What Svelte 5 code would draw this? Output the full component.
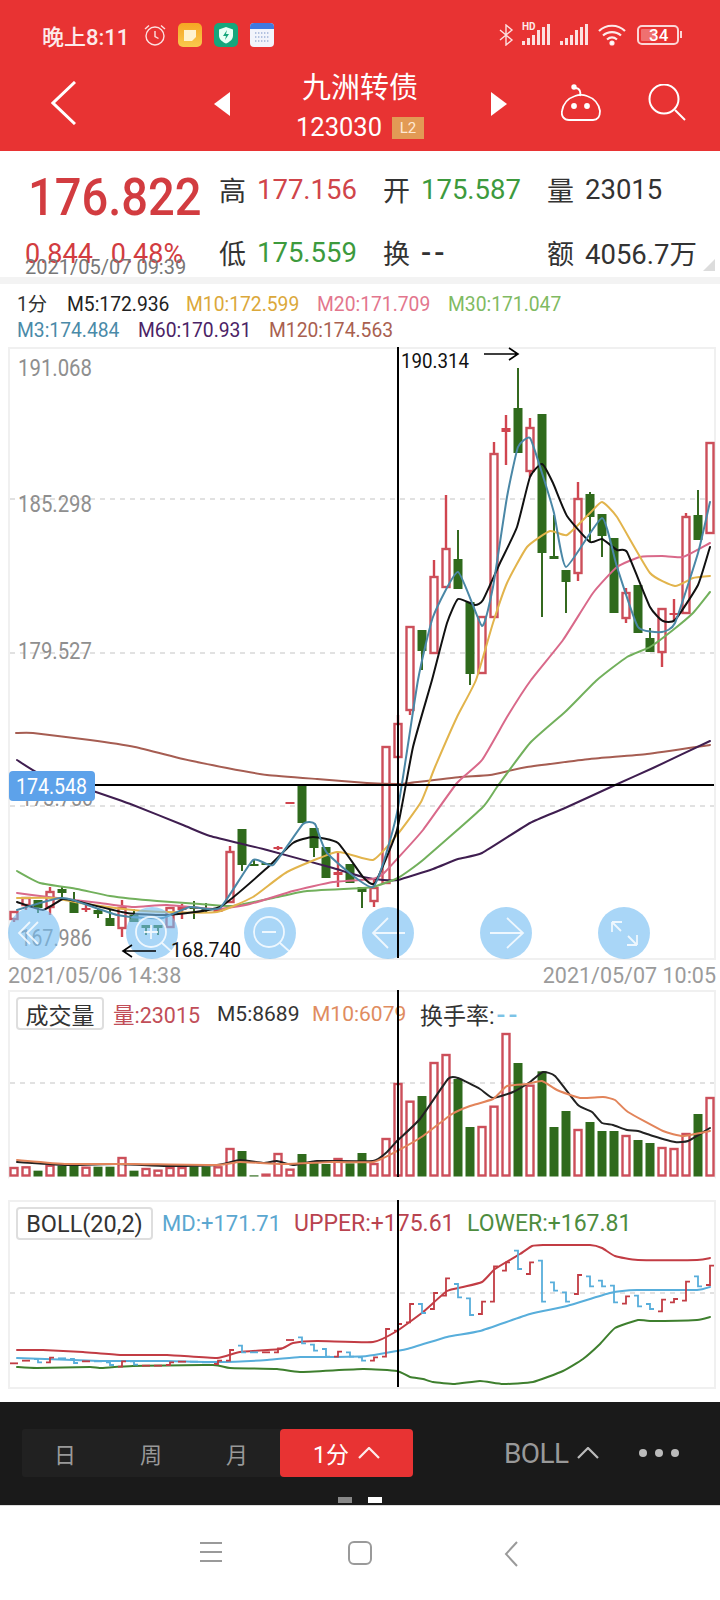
<script>
  const X = (i) => 14 + 12 * i;
  // colour, wick top, body top, body bottom, wick bottom
  const candles = [
    ['r',912,912,919,922],['r',897,898,905,910],['g',900,900,908,913],['r',887,892,907,915],['g',887,889,893,897],
    ['g',892,902,913,913],['r',904,908,909,912],['g',908,910,914,918],['g',910,918,926,926],['r',900,908,928,937],
    ['g',909,915,922,922],['g',925,925,928,935],['g',925,925,928,935],['r',908,908,927,927],['r',904,906,910,919],
    ['g',901,907,909,919],['g',903,908,910,912],['r',908,908,912,912],['r',846,852,902,902],['g',829,829,865,871],
    ['g',860,864,866,866],['g',863,863,865,865],['r',846,847,849,850],['r',802,802,804,804],['g',785,785,823,823],
    ['g',828,828,848,857],['g',847,847,878,878],['r',852,872,875,887],['g',864,864,883,883],['g',887,887,892,908],
    ['r',880,888,901,907],['r',747,747,883,883],['r',715,724,757,757],['r',627,627,710,715],['g',630,630,651,670],
    ['r',560,577,653,653],['r',495,549,587,587],['g',530,559,589,589],['g',602,602,674,685],['r',617,617,673,673],
    ['r',442,454,617,617],['r',415,428,432,465],['g',368,408,453,453],['r',418,428,471,477],['g',414,414,553,617],
    ['g',515,556,559,559],['g',570,570,582,613],['r',482,499,573,581],['g',492,494,517,542],['g',514,514,536,557],
    ['g',538,538,613,613],['r',588,593,618,623],['g',585,585,633,633],['g',628,638,652,652],['r',609,609,652,667],
    ['r',599,613,615,620],['r',513,517,613,613],['g',490,515,540,540],['r',443,443,533,533]
  ];
  const m120 = [[16,733],[33,733],[90,740],[135,747],[183,759],[227,768],[267,775],[317,779],[367,783],[397,784],[410,783],[460,777],[490,775],[527,767],[590,759],[647,754],[710,745]];
  const m60 = [[17,760],[40,774],[90,790],[133,805],[183,825],[210,836],[267,850],[333,868],[363,877],[383,880],[398,880],[433,869],[458,859],[482,853],[530,823],[565,808],[613,786],[653,768],[710,741]];
  const m30 = [[17,871],[40,883],[77,889],[110,896],[157,901],[200,904],[233,906],[273,898],[307,891],[363,888],[373,887],[398,878],[423,860],[482,808],[497,787],[530,743],[565,712],[597,680],[627,657],[650,647],[673,630],[693,613],[710,592]];
  const m20 = [[17,893],[40,896],[100,903],[133,907],[167,905],[217,909],[250,904],[293,891],[333,882],[373,879],[383,874],[398,858],[423,830],[457,783],[482,760],[507,717],[531,680],[563,640],[593,593],[617,567],[640,557],[662,556],[683,557],[710,543]];
  const m10 = [[17,898],[53,898],[80,903],[133,910],[167,912],[217,912],[253,897],[287,872],[337,852],[373,860],[397,835],[421,802],[435,767],[457,717],[476,680],[493,623],[507,583],[527,547],[550,531],[567,535],[590,513],[602,502],[617,517],[650,573],[675,586],[693,578],[710,576]];
  const m5 = [[17,902],[43,910],[63,899],[80,902],[127,913],[167,915],[220,907],[267,868],[293,843],[313,837],[338,843],[363,877],[375,883],[397,830],[413,747],[432,680],[447,623],[458,599],[475,605],[483,600],[500,563],[517,527],[530,477],[542,464],[553,483],[567,516],[590,542],[602,539],[617,550],[627,552],[650,607],[663,621],[675,620],[698,585],[710,547]];
  const m3 = [[17,910],[40,903],[60,898],[73,900],[117,915],[147,918],[163,918],[190,907],[220,908],[253,860],[273,865],[303,824],[315,824],[327,853],[373,887],[397,813],[418,680],[433,617],[458,572],[482,626],[493,587],[507,497],[518,447],[530,438],[542,473],[554,513],[566,567],[602,518],[617,567],[638,627],[662,632],[675,623],[698,553],[710,502]];
  const priceLines = [[m120,'#a65d52'],[m60,'#3f1e50'],[m30,'#72b05c'],[m20,'#d9698a'],[m10,'#e2b44c'],[m5,'#111'],[m3,'#4a87a6']];

  const volTop = [
    ['r',567],['r',565],['g',575],['r',560],['g',560],['g',560],['r',566],['g',563],['g',563],['r',537],
    ['g',575],['r',570],['r',575],['r',567],['r',567],['g',562],['g',562],['r',565],['r',510],['g',516],
    ['g',589],['r',587],['r',525],['r',572],['g',525],['g',548],['g',555],['r',540],['g',553],['g',522],
    ['r',555],['r',480],['r',315],['r',368],['g',351],['r',252],['r',228],['g',300],['g',444],['r',444],
    ['r',383],['r',165],['g',252],['r',320],['g',277],['g',444],['g',396],['r',453],['g',429],['g',456],
    ['g',456],['r',471],['g',483],['g',492],['r',507],['r',510],['r',465],['g',405],['r',357]
  ];
  const volBars = volTop.map(([c, t]) => [c, 980 + t / 3]);
  const volM5 = [[17,1163],[67,1166],[117,1165],[167,1167],[217,1166],[240,1161],[263,1164],[277,1162],[293,1166],[317,1162],[373,1162],[387,1153],[397,1142],[420,1120],[448,1080],[458,1079],[480,1090],[493,1099],[513,1093],[530,1083],[543,1073],[555,1077],[578,1106],[592,1113],[602,1124],[613,1126],[627,1131],[638,1132],[653,1137],[675,1143],[688,1142],[710,1129]];
  const volM10 = [[17,1161],[67,1165],[133,1165],[217,1166],[240,1163],[283,1165],[333,1163],[373,1163],[397,1152],[423,1137],[452,1115],[470,1107],[493,1100],[507,1087],[527,1085],[542,1082],[557,1091],[580,1099],[603,1098],[615,1101],[628,1113],[663,1132],[683,1137],[710,1132]];

  const upper = [[17,1351],[43,1351],[83,1353],[120,1356],[167,1356],[217,1359],[240,1353],[280,1350],[293,1344],[317,1342],[373,1343],[397,1332],[423,1313],[447,1292],[463,1288],[482,1283],[495,1270],[520,1255],[532,1247],[543,1246],[590,1246],[602,1249],[615,1257],[638,1261],[697,1261],[710,1259]];
  const md = [[17,1359],[100,1362],[167,1362],[217,1363],[267,1361],[300,1358],[333,1358],[367,1357],[407,1350],[447,1338],[480,1332],[530,1315],[567,1307],[610,1294],[637,1291],[697,1291],[710,1288]];
  const lower = [[17,1368],[37,1369],[90,1368],[100,1369],[133,1367],[213,1366],[230,1369],[277,1370],[300,1373],[363,1370],[397,1372],[410,1378],[423,1380],[433,1383],[455,1385],[480,1382],[503,1385],[533,1383],[563,1372],[583,1360],[600,1345],[615,1329],[638,1321],[650,1322],[697,1321],[710,1318]];
  // colour, top and bottom of the step mark (zoomed units of the chart)
  const steps = [
    ['r',523,523],['r',515,515],['b',510,520],['r',506,520],['b',508,508],['b',510,522],['r',517,517],['b',517,517],['b',520,528],['r',517,533],
    ['b',517,527],['r',530,530],['r',530,530],['r',520,528],['r',518,518],['b',518,518],['b',520,520],['r',515,525],['r',483,515],['b',470,490],
    ['b',490,490],['r',490,490],['r',478,490],['r',453,453],['b',445,463],['b',467,485],['b',480,503],['r',488,503],['b',490,503],['b',505,515],
    ['r',505,515],['r',420,503],['r',405,425],['r',345,400],['b',345,372],['r',312,360],['r',268,320],['b',285,325],['b',328,378],['r',338,375],
    ['r',232,338],['r',220,245],['b',185,240],['r',220,255],['b',215,338],['b',280,305],['b',310,338],['r',258,315],['b',262,292],['b',275,292],
    ['b',290,340],['r',322,344],['b',320,352],['b',345,360],['r',332,367],['r',330,340],['r',278,335],['b',262,292],['r',230,288]
  ].map(([c, a, b]) => [c, 1190 + a / 3, 1190 + b / 3]);

  function markPath(i, c, t, b) {
    const x = X(i);
    if (t === b) return `M${x - 4} ${t}H${x + 4}`;
    return c === 'r'
      ? `M${x - 4} ${b}H${x}V${t}H${x + 4}`
      : `M${x - 4} ${t}H${x}V${b}H${x + 4}`;
  }
  function curve(pts) {
    let d = `M${pts[0][0]} ${pts[0][1]}`;
    for (let i = 0; i < pts.length - 1; i++) {
      const p0 = pts[i - 1] || pts[i], p1 = pts[i], p2 = pts[i + 1], p3 = pts[i + 2] || p2;
      const k = 0.08;
      const c1x = p1[0] + (p2[0] - p0[0]) * k, c1y = p1[1] + (p2[1] - p0[1]) * k;
      const c2x = p2[0] - (p3[0] - p1[0]) * k, c2y = p2[1] - (p3[1] - p1[1]) * k;
      d += `C${c1x.toFixed(1)} ${c1y.toFixed(1)} ${c2x.toFixed(1)} ${c2y.toFixed(1)} ${p2[0]} ${p2[1]}`;
    }
    return d;
  }
  const circles = [34, 152, 270, 388, 506, 624];
</script>

<div class="page">
  <header class="top">
    <div class="status">
      <span class="clock">晚上8:11</span>
      <svg class="st" width="24" height="24" viewBox="0 0 24 24" fill="none" stroke="#fff" stroke-opacity=".85" stroke-width="1.4">
        <circle cx="12" cy="13" r="9"/><path d="M12 8v5.5l3.5 2M2 6l4-3.5M22 6l-4-3.5"/>
      </svg>
      <svg class="st appa" width="24" height="24" viewBox="0 0 24 24">
        <defs><linearGradient id="ga" x1="0" y1="0" x2="0" y2="1"><stop offset="0" stop-color="#f6a623"/><stop offset="1" stop-color="#f9c94e"/></linearGradient></defs>
        <rect width="24" height="24" rx="5" fill="url(#ga)"/><path d="M6 7h12v7l-4 4H6z" fill="#fff3cf"/>
      </svg>
      <svg class="st appb" width="24" height="24" viewBox="0 0 24 24">
        <rect width="24" height="24" rx="5" fill="#16a67c"/><path d="M12 4l7 2.5v6c0 4-3.5 6.500-7 8-3.500-1.500-7-4-7-8v-6z" fill="#e8fff6"/><path d="M13 7l-4 6h3l-1 4 4-6h-3z" fill="#16a67c"/>
      </svg>
      <svg class="st appb" width="24" height="24" viewBox="0 0 24 24">
        <rect width="24" height="24" rx="4" fill="#f2f4fb"/><path d="M0 6V4a4 4 0 0 1 4-4h16a4 4 0 0 1 4 4v2z" fill="#3f79e0"/>
        <path d="M5 10h14M5 14h14M5 18h14" stroke="#9fb1d8" stroke-width="1.400" stroke-dasharray="1.400 1.600"/>
      </svg>
      <span class="spring"></span>
      <svg width="15" height="22" viewBox="0 0 15 22" fill="none" stroke="#fff" stroke-opacity=".85" stroke-width="1.400"><path d="M1 6l12 10-6 5V1l6 5L1 16"/></svg>
      <span class="hd">
        <span class="hdt">HD</span>
        <svg width="29" height="21" viewBox="0 0 29 21" fill="#fff" fill-opacity=".85"><rect x="0" y="17" width="3" height="4"/><rect x="5" y="14" width="3" height="7"/><rect x="10" y="11" width="3" height="10"/><rect x="15" y="6" width="3" height="15"/><rect x="20" y="3" width="3" height="18"/><rect x="25" y="0" width="3" height="21"/></svg>
      </span>
      <svg class="sig" width="28" height="21" viewBox="0 0 28 21" fill="#fff" fill-opacity=".85"><rect x="0" y="17" width="3" height="4"/><rect x="5" y="14" width="3" height="7"/><rect x="10" y="11" width="3" height="10"/><rect x="15" y="6" width="3" height="15"/><rect x="20" y="3" width="3" height="18"/><rect x="25" y="0" width="3" height="21"/></svg>
      <svg class="wifi" width="28" height="22" viewBox="0 0 28 22" fill="none" stroke="#fff" stroke-opacity=".9" stroke-width="2.200"><path d="M1 7c7-7 19-7 26 0M5 11.500c5-4.500 13-4.500 18 0M9 15.500c3-2.500 7-2.500 10 0"/><circle cx="14" cy="19" r="1.500" fill="#fff"/></svg>
      <span class="batt"><span class="battfill"></span><span class="battn">34</span></span>
      <span class="battcap"></span>
    </div>
    <div class="nav">
      <svg class="back" width="25" height="44" viewBox="0 0 25 44" fill="none" stroke="#fff" stroke-width="3"><path d="M24 1L2 22l22 21"/></svg>
      <svg class="prev" width="17" height="24" viewBox="0 0 17 24" fill="#fff"><path d="M16 0v24L0 12z"/></svg>
      <div class="title">
        <div class="name">九洲转债</div>
        <div class="code">123030<span class="l2">L2</span></div>
      </div>
      <svg class="next" width="17" height="24" viewBox="0 0 17 24" fill="#fff"><path d="M0 0v24l16-12z"/></svg>
      <svg class="robot" width="40" height="37" viewBox="0 0 40 37" fill="none" stroke="#fff" stroke-width="1.800">
        <path d="M14 12a19 19 0 0 0-13 15c-1 5 2 9 7 9h24c5 0 7-4 7-9a19 19 0 0 0-13-15c-4-1.500-8-1.500-12 0z"/>
        <path d="M14 4c5 0 6 4 5 8"/><circle cx="13" cy="3" r="1.800" fill="#fff"/>
        <circle cx="13" cy="22" r="2" fill="#fff"/><circle cx="26" cy="22" r="2" fill="#fff"/>
      </svg>
      <svg class="search" width="38" height="37" viewBox="0 0 38 37" fill="none" stroke="#fff" stroke-width="2"><circle cx="16" cy="15" r="14.500"/><path d="M27 26l10 10"/></svg>
    </div>
  </header>

  <section class="quote">
    <div class="qrow">
      <div class="big">176.822</div>
      <div class="cell"><b>高</b><span class="red">177.156</span></div>
      <div class="cell"><b>开</b><span class="green">175.587</span></div>
      <div class="cell last"><b>量</b><span>23015</span></div>
    </div>
    <div class="qrow second">
      <div class="chg"><span>0.844</span><span>0.48%</span></div>
      <div class="cell"><b>低</b><span class="green">175.559</span></div>
      <div class="cell"><b>换</b><span class="dd">--</span></div>
      <div class="cell last"><b>额</b><span>4056.7万</span></div>
    </div>
    <div class="qtime">2021/05/07 09:39</div>
    <div class="corner"></div>
  </section>
  <div class="sep"></div>

  <section class="legend">
    <div class="lrow">
      <span class="fen">1分</span><span class="k">M5:172.936</span><span class="m10">M10:172.599</span><span class="m20">M20:171.709</span><span class="m30">M30:171.047</span>
    </div>
    <div class="lrow">
      <span class="m3">M3:174.484</span><span class="m60">M60:170.931</span><span class="m120">M120:174.563</span>
    </div>
  </section>

  <section class="panel mainp">
    <svg width="704" height="609" viewBox="10 349 704 609">
      <g class="dash"><path d="M10 499H714M10 653H714M10 806H714"/></g>
      <text class="ax" x="18" y="376" textLength="74" lengthAdjust="spacingAndGlyphs">191.068</text>
      <text class="ax" x="18" y="512" textLength="74" lengthAdjust="spacingAndGlyphs">185.298</text>
      <text class="ax" x="18" y="659" textLength="74" lengthAdjust="spacingAndGlyphs">179.527</text>
      <text class="ax" x="21" y="806" textLength="72" lengthAdjust="spacingAndGlyphs">173.756</text>
      <text class="ax" x="20" y="946" textLength="72" lengthAdjust="spacingAndGlyphs">167.986</text>

      {#each candles as [c, wt, bt, bb, wb], i}
        {#if c === 'r'}
          <path class="wr" d="M{X(i)} {wt}V{wb}"/>
          {#if bb - bt < 5}
            <rect x={X(i) - 4.500} y={bt} width="9" height={Math.max(bb - bt, 2)} fill="#d0454f"/>
          {:else}
            <rect class="br" x={X(i) - 3.500} y={bt} width="7" height={bb - bt}/>
          {/if}
        {:else}
          <path class="wg" d="M{X(i)} {wt}V{wb}"/>
          <rect class="bg" x={X(i) - 4.500} y={bt} width="9" height={Math.max(bb - bt, 2)}/>
        {/if}
      {/each}

      {#each priceLines as [pts, col]}
        <path class="ln" d={curve(pts)} stroke={col}/>
      {/each}

      {#each circles as cx}
        <circle {cx} cy="933" r="26" class="fab"/>
      {/each}
      <g class="ic">
        <path d="M30 922l-11 11 11 11M38 922l-11 11 11 11"/>
        <circle cx="151" cy="932" r="15"/><path d="M162 943l10 9M144 932h14M151 925v14"/>
        <circle cx="269" cy="932" r="15"/><path d="M280 943l10 9M262 932h14"/>
        <path d="M405 933H373M388 918l-15 15 15 15"/>
        <path d="M490 933H523M507 918l16 15-16 15"/>
        <path d="M612 922l9 9M612 922h10M612 922v10M637 945l-9-9M637 945h-10M637 945v-10"/>
      </g>

      <rect x="9" y="771" width="86" height="30" rx="4" fill="#5da2ea"/>
      <text class="tag" x="16" y="794" textLength="71" lengthAdjust="spacingAndGlyphs">174.548</text>
      <path class="cross" d="M95 785H714M398 347V958"/>

      <text class="blk" x="401" y="368" textLength="68" lengthAdjust="spacingAndGlyphs">190.314</text>
      <path class="arr" d="M484 354H518M509 348l9 6-9 6"/>
      <text class="blk" x="171" y="957" textLength="70" lengthAdjust="spacingAndGlyphs">168.740</text>
      <path class="arr" d="M156 951H123M132 945l-9 6 9 6"/>
    </svg>
  </section>

  <div class="dates"><span>2021/05/06 14:38</span><span>2021/05/07 10:05</span></div>

  <section class="panel volp">
    <div class="phead">
      <span class="btn w1">成交量</span>
      <span class="vr">量:23015</span><span class="vk">M5:8689</span><span class="vo">M10:6079</span><span class="vg">换手率:<i>--</i></span>
    </div>
    <svg class="over" width="704" height="185" viewBox="10 993 704 185">
      <path class="dash" d="M10 1084H714"/>
      {#each volBars as [c, t], i}
        {#if c === 'r'}
          <rect class="br" x={X(i) - 3.500} y={t} width="7" height={1176.500 - t}/>
        {:else}
          <rect class="bg" x={X(i) - 4.500} y={t} width="9" height={1177.500 - t}/>
        {/if}
      {/each}
      <path class="ln" d={curve(volM5)} stroke="#222"/>
      <path class="ln" d={curve(volM10)} stroke="#e2845a"/>
      <path class="cross" d="M398 991V1178"/>
    </svg>
  </section>

  <section class="panel bollp">
    <div class="phead">
      <span class="btn w2">BOLL(20,2)</span>
      <span class="bm">MD:+171.71</span><span class="bu">UPPER:+175.61</span><span class="bl">LOWER:+167.81</span>
    </div>
    <svg class="over" width="704" height="185" viewBox="10 1203 704 185">
      <path class="dash" d="M10 1294H714"/>
      <path class="ln" d={curve(upper)} stroke="#c23c44"/>
      <path class="ln" d={curve(md)} stroke="#58aedb"/>
      <path class="ln" d={curve(lower)} stroke="#3e7f2e"/>
      {#each steps as [c, t, b], i}
        <path class="mk" d={markPath(i, c, t, b)} stroke={c === 'r' ? '#c23c44' : '#58aedb'}/>
      {/each}
      <path class="cross" d="M398 1201V1388"/>
    </svg>
  </section>

  <footer class="bar">
    <div class="tabs">
      <span class="tab">日</span><span class="tab">周</span><span class="tab">月</span>
      <span class="tab on">1分
        <svg width="22" height="12" viewBox="0 0 22 12" fill="none" stroke="#fff" stroke-width="2.200" stroke-opacity=".9"><path d="M1 11L11 1l10 10"/></svg>
      </span>
    </div>
    <div class="boll">BOLL
      <svg width="22" height="12" viewBox="0 0 22 12" fill="none" stroke="#bbb" stroke-width="2.200"><path d="M1 11L11 1l10 10"/></svg>
    </div>
    <div class="more"><i></i><i></i><i></i></div>
    <div class="pager"><i></i><i class="act"></i></div>
  </footer>

  <nav class="sysnav">
    <svg width="22" height="22" viewBox="0 0 22 22" stroke="#9a9a9a" stroke-width="2"><path d="M0 2h22M0 11h22M0 20h22"/></svg>
    <svg width="24" height="24" viewBox="0 0 24 24" fill="none" stroke="#9a9a9a" stroke-width="2"><rect x="1" y="1" width="22" height="22" rx="5"/></svg>
    <svg width="14" height="26" viewBox="0 0 14 26" fill="none" stroke="#9a9a9a" stroke-width="2"><path d="M13 1L2 13l11 12"/></svg>
  </nav>
</div>

<style>
  :global(body) { margin: 0; background: #fff; }
  .page {
    width: 720px; height: 1600px; overflow: hidden; background: #fff;
    font-family: Roboto, "Noto Sans CJK SC", sans-serif; color: #333;
  }
  .top { height: 151px; background: #e83333; color: #fff; }
  .status { height: 60px; padding: 9px 0 0 42px; box-sizing: border-box; display: flex; align-items: center; }
  .clock { width: 89px; font-size: 22px; font-weight: 500; color: #fff; opacity: .9; white-space: nowrap; }
  .st { margin-left: 12px; flex: none; }
  .appa { margin-left: 11px; }
  .spring { flex: 1; }
  .hd { position: relative; margin-left: 8px; height: 21px; display: block; }
  .hdt { position: absolute; left: 0; top: -3px; font-size: 10px; font-weight: 700; color: #fff; opacity: .9; }
  .sig { margin-left: 9px; }
  .wifi { margin-left: 10px; }
  .batt {
    margin-left: 11px; width: 42px; height: 20px; box-sizing: border-box; border: 2px solid rgba(255,255,255,.8);
    border-radius: 5px; position: relative; display: block;
  }
  .battfill { position: absolute; left: 2px; top: 2px; bottom: 2px; width: 14px; background: rgba(255,255,255,.3); border-radius: 1px; }
  .battn { position: absolute; left: 10px; top: -2px; font-size: 17px; line-height: 20px; font-weight: 500; color: #fff; }
  .battcap { width: 2px; height: 7px; background: rgba(255,255,255,.8); margin: 0 38px 0 1px; }

  .nav { height: 91px; position: relative; display: flex; align-items: flex-start; }
  .back { margin: 21px 0 0 51px; flex: none; }
  .prev { margin: 32px 0 0 138px; flex: none; }
  .title { width: 260px; flex: none; display: flex; flex-direction: column; align-items: center; }
  .name { font-size: 29px; line-height: 34px; margin-top: 11px; width: 118px; white-space: nowrap; }
  .code { font-size: 25.5px; line-height: 27px; margin-top: 9px; margin-left: -2px; display: flex; align-items: center; }
  .l2 { width: 32px; height: 22px; margin-left: 10px; background: #e29a55; font-size: 15px; line-height: 22px; text-align: center; color: #ffe9d4; }
  .next { margin: 32px 0 0 0; flex: none; }
  .robot { margin: 24px 0 0 53px; flex: none; }
  .search { margin: 24px 0 0 47px; flex: none; }

  .quote { height: 126px; position: relative; }
  .qrow { display: flex; align-items: center; height: 62px; padding-top: 14px; box-sizing: content-box; }
  .qrow.second { height: 42px; padding-top: 0; margin-top: 4px; }
  .qrow:not(.second) .cell { align-self: flex-start; height: 48px; }
  .big {
    width: 219px; box-sizing: border-box; padding-left: 28px; font-size: 52px; line-height: 62px; font-weight: 500; color: #d23c40;
    transform: translateY(2px) scaleX(.905); transform-origin: 28px 0; letter-spacing: 0; white-space: nowrap;
  }
  .chg { width: 219px; box-sizing: border-box; padding-left: 25px; display: flex; gap: 18px; font-size: 27px; color: #d23c40; margin-top: 3px; white-space: nowrap; }
  .cell { width: 164px; display: flex; align-items: center; font-size: 27.5px; white-space: nowrap; }
  .cell b { font-weight: 400; width: 38px; flex: none; font-size: 27px; }
  .cell.last { width: auto; }
  .dd { letter-spacing: 3px; font-size: 30px; font-weight: 500; }
  .red { color: #d0454a; }
  .green { color: #3d9a3d; }
  .qtime { position: absolute; left: 25px; top: 107px; font-size: 20px; line-height: 18px; color: #777; }
  .corner { position: absolute; left: 703px; top: 108px; width: 0; height: 0; border-left: 12px solid transparent; border-bottom: 12px solid #dcdcdc; }
  .sep { height: 7px; background: #f3f3f3; }

  .legend { height: 63px; box-sizing: border-box; padding: 8px 0 0 17px; font-size: 19.3px; line-height: 26px; }
  .lrow { display: flex; white-space: nowrap; height: 26px; }
  .fen { width: 50px; color: #333; }
  .k { width: 119px; color: #222; }
  .m10 { width: 131px; color: #dba83a; }
  .m20 { width: 131px; color: #e3768d; }
  .m30 { color: #7fba62; }
  .m3 { width: 121px; color: #4a8aa8; }
  .m60 { width: 131px; color: #4b2366; }
  .m120 { color: #a9604f; }

  .panel { margin-left: 8px; width: 708px; box-sizing: border-box; border: 2px solid #f0f0f0; position: relative; }
  .mainp { height: 613px; }
  .mainp svg, .over { display: block; overflow: visible; }
  .dates {
    height: 30px; margin: 0 4px 0 8px; display: flex; justify-content: space-between; align-items: center;
    font-size: 21.5px; color: #9b9b9b;
  }
  .volp { height: 189px; border-bottom-color: #fff; }
  .bollp { height: 189px; margin-top: 21px; }
  .over { position: absolute; left: 0; top: 0; }
  .phead { display: flex; align-items: center; height: 33px; margin-top: 5px; padding-left: 6px; font-size: 23px; white-space: nowrap; }
  .btn {
    box-sizing: border-box; height: 33px; border: 2px solid #dedede; border-radius: 4px; color: #333; background: #fff;
    display: flex; align-items: center; justify-content: center; flex: none;
  }
  .w1 { width: 88px; }
  .w2 { width: 137px; font-size: 23.5px; }
  .vr { width: 104px; margin-left: 9px; color: #c14e58; font-size: 21.5px; }
  .vk { width: 95px; color: #333; font-size: 21px; }
  .vo { width: 108px; color: #e08c60; font-size: 21px; }
  .vg { color: #333; }
  .vg i { font-style: normal; color: #7cc3e6; font-size: 26px; font-weight: 500; letter-spacing: 3px; margin-left: 2px; }
  .bm { width: 132px; margin-left: 9px; color: #5ba7d0; font-size: 22px; }
  .bu { width: 173px; color: #b9434f; }
  .bl { color: #4d8c3e; }

  .dash { fill: none; stroke: #d8d8d8; stroke-width: 1.5; stroke-dasharray: 5 5; }
  .dash path { fill: none; }
  .ax { font-size: 23px; fill: #8f8f8f; }
  .tag { font-size: 22px; fill: #fff; }
  .blk { font-size: 20px; fill: #111; }
  .wr { stroke: #d0454f; stroke-width: 2.4; fill: none; }
  .wg { stroke: #34691f; stroke-width: 2; fill: none; }
  .br { fill: #fff; stroke: #cc4f5a; stroke-width: 2.4; }
  .bg { fill: #2f6a1c; }
  .ln { fill: none; stroke-width: 2; stroke-linejoin: round; stroke-linecap: round; }
  .mk { fill: none; stroke-width: 1.8; }
  .fab { fill: #74bdf2; fill-opacity: .62; }
  .ic path, .ic circle { fill: none; stroke: #fff; stroke-opacity: .8; stroke-width: 1.800; }
  .cross { fill: none; stroke: #000; stroke-width: 2; }
  .arr { fill: none; stroke: #000; stroke-width: 1.600; }

  .bar { height: 103px; margin-top: 13px; background: #1a1a1a; position: relative; display: flex; align-items: flex-start; padding: 27px 0 0 22px; box-sizing: border-box; }
  .tabs { display: flex; height: 48px; background: #212121; border-radius: 3px; width: 391px; flex: none; }
  .tab { width: 86px; display: flex; align-items: center; justify-content: center; font-size: 22px; color: #999; }
  .tab.on { width: 133px; background: #e83333; color: #fff; border-radius: 4px; gap: 9px; font-size: 23px; }
  .boll { margin-left: 91px; height: 48px; display: flex; align-items: center; gap: 9px; font-size: 28px; letter-spacing: -.6px; color: #999; }
  .more { margin-left: 40px; height: 48px; display: flex; align-items: center; gap: 8px; }
  .more i { width: 8px; height: 8px; border-radius: 50%; background: #bbb; display: block; }
  .pager { position: absolute; left: 338px; top: 95px; display: flex; gap: 16px; }
  .pager i { width: 14px; height: 6px; background: #888; display: block; }
  .pager i.act { background: #fff; }
  .sysnav { height: 96px; box-sizing: border-box; border-top: 1px solid #dcdcdc; display: flex; align-items: flex-start; padding: 35px 0 0 200px; }
  .sysnav svg:nth-child(2) { margin: 0 0 0 126px; }
  .sysnav svg:nth-child(3) { margin: 0 0 0 132px; }
</style>
